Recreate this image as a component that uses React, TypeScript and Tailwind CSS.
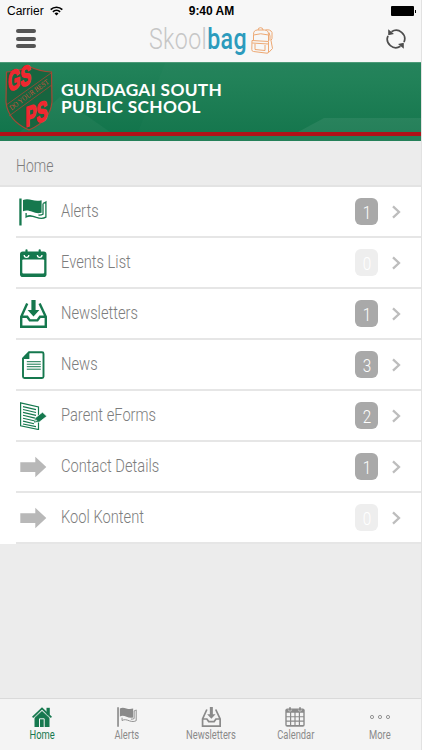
import type { ReactNode } from "react";

type IconProps = { className?: string };

function FlagIcon({ className }: IconProps) {
  return (
    <svg viewBox="0 0 28 28" className={className} fill="currentColor">
      <path d="M.3.5h2.300v27H.3z" />
      <path d="M4 2c3-1.400 6-.9 9 0s6 1.200 9.600.2v12.600c-3.500.8-6.300.4-9.300-1S7 11.800 4 13.200z" />
      <path
        d="M24 5.400c1.200-.2 2-.6 2.900-1.300v15c-2.500 1.600-6 1.500-9.500.3-4-1.500-7-2.600-10.300-.4v-4M24 5.400v10.800q-1.800 1-4.500.8"
        fill="none"
        stroke="currentColor"
        strokeWidth="1.300"
      />
    </svg>
  );
}

function EventsIcon({ className }: IconProps) {
  return (
    <svg viewBox="0 0 28 28" className={className}>
      <rect x="1" y="2.500" width="26.500" height="25.500" rx="2.800" fill="currentColor" />
      <rect x="3.300" y="10.500" width="21.900" height="14" rx="1" fill="#fff" />
      <path d="M5.200 6a2.300 2.300 0 0 0 4.600 0M18.400 6a2.300 2.300 0 0 0 4.600 0" fill="none" stroke="#fff" strokeWidth="1.300" />
      <path d="M7.500 1.300v5M20.700 1.300v5" stroke="currentColor" strokeWidth="2.200" strokeLinecap="round" />
    </svg>
  );
}

function InboxIcon({ className }: IconProps) {
  return (
    <svg viewBox="0 0 28 28" className={className}>
      <path
        d="M8.200 3.500 2.200 16.800v10h24.600v-10L20.600 3.500M2.200 16.800h6l2.600 3.600h7.600l2.600-3.600h5.800"
        fill="none"
        stroke="currentColor"
        strokeWidth="2.400"
      />
      <path d="M12.400 0h4.200v10h3.800l-5.900 6.600L8.600 10h3.800z" fill="currentColor" />
    </svg>
  );
}

function NewsIcon({ className }: IconProps) {
  return (
    <svg viewBox="0 0 28 28" className={className}>
      <path d="M10 1.300h13a1.500 1.500 0 0 1 1.500 1.500v22.700A1.500 1.500 0 0 1 23 27H5.500A1.500 1.500 0 0 1 4 25.500V7.500z" fill="none" stroke="currentColor" strokeWidth="1.900" />
      <path d="M10.400.6v7.300H3.200z" fill="currentColor" />
      <path d="M7.800 10.700h14M7.800 13.200h14M7.800 15.700h14M7.800 18.200h14" stroke="currentColor" strokeWidth="1" />
    </svg>
  );
}

function FormIcon({ className }: IconProps) {
  return (
    <svg viewBox="0 0 28 28" className={className}>
      <path d="M1.600.8 19.500 5v22.500L1.600 23.800z" fill="none" stroke="currentColor" strokeWidth="1.200" />
      <path
        d="m4 4.600 13 3M4 7.500l13 3M4 10.400l13 3M4 13.300l12 2.800M4 16.200l11 2.600M4 19.100l11 2.600M4 22l13 2.600"
        stroke="currentColor"
        strokeWidth="1.100"
      />
      <path d="m15 20.500 1.500-4.800 7-5.500 4.300 4.100-7.500 5.800z" fill="currentColor" stroke="#fff" strokeWidth=".7" />
      <path d="m15.300 20.200 1.300-3.600 2 2.500z" fill="#fff" stroke="currentColor" strokeWidth=".7" />
    </svg>
  );
}

function ArrowIcon({ className }: IconProps) {
  return (
    <svg viewBox="0 0 28 28" className={className} fill="currentColor">
      <path d="M1.300 9.200h15V3.800l11 10.300-11 10.200v-5.400h-15z" />
    </svg>
  );
}

function HomeIcon({ className }: IconProps) {
  return (
    <svg viewBox="0 0 20 20" className={className}>
      <path d="M14.500.8h3.300v7h-3.300z" fill="currentColor" />
      <path d="M2.500 10 10 3.500l7.500 6.500v10h-15z" fill="currentColor" />
      <path d="m.6 10.400 9.400-9 9.400 9" fill="none" stroke="currentColor" strokeWidth="1.700" />
      <path d="m1.800 11.300 8.200-7.700 8.200 7.700" fill="none" stroke="#f4f4f4" strokeWidth=".7" />
      <path d="M7.500 20v-8.200h4.700V20" fill="none" stroke="#f4f4f4" strokeWidth="1" />
    </svg>
  );
}

function CalendarIcon({ className }: IconProps) {
  return (
    <svg viewBox="0 0 20 20" className={className}>
      <rect x=".3" y="1.500" width="19.400" height="18.300" rx="2" fill="currentColor" />
      <path d="M5 .2v3M15 .2v3" stroke="currentColor" strokeWidth="1.800" />
      <path d="M3.300 2.500a1.700 1.700 0 0 0 3.400 0M13.300 2.500a1.700 1.700 0 0 0 3.400 0" fill="none" stroke="#f4f4f4" strokeWidth=".5" />
      <path
        d="M1.700 5.800h3.300v3.400H1.700zm4.500 0h3.200v3.400H6.200zm4.400 0h3.200v3.400h-3.200zm4.400 0h3.300v3.400h-3.300zM1.700 10.300h3.300v3.300H1.700zm4.500 0h3.200v3.300H6.200zm4.400 0h3.200v3.300h-3.200zm4.400 0h3.300v3.300h-3.300zM1.700 14.700h3.300v3.400H1.700zm4.500 0h3.200v3.400H6.200zm4.400 0h3.200v3.400h-3.200zm4.400 0h3.300v3.400h-3.300z"
        fill="#f4f4f4"
      />
    </svg>
  );
}

function MoreIcon({ className }: IconProps) {
  return (
    <svg viewBox="0 0 20 20" className={className} fill="none" stroke="currentColor" strokeWidth=".9">
      <circle cx="2" cy="10" r="1.600" />
      <circle cx="10" cy="10" r="1.600" />
      <circle cx="18" cy="10" r="1.600" />
    </svg>
  );
}

function WifiIcon({ className }: IconProps) {
  return (
    <svg viewBox="0 0 13 10" className={className} fill="none" stroke="#000" strokeWidth="1.700">
      <path d="M.7 3.600a8.300 8.300 0 0 1 11.600 0M2.900 5.900a5.200 5.200 0 0 1 7.200 0" />
      <path d="M4.500 7.500a2.900 2.900 0 0 1 4 0l-2 2z" fill="#000" stroke="none" />
    </svg>
  );
}

function RefreshIcon({ className }: IconProps) {
  return (
    <svg viewBox="0 0 20 20" className={className}>
      <path d="M5.500 2.800A8.500 8.500 0 0 1 18 13.200M14.500 17.200A8.500 8.500 0 0 1 2 6.800" fill="none" stroke="#4d4d4d" strokeWidth="1.700" />
      <path d="M2.200.3v6l5.800-1.300zM17.800 19.700v-6l-5.800 1.300z" fill="#4d4d4d" />
    </svg>
  );
}

function BackpackIcon({ className }: IconProps) {
  return (
    <svg viewBox="0 0 23 27" className={className} fill="none" stroke="#eda873" strokeWidth="1" strokeLinejoin="round">
      <path d="M2.500 13V7.500q0-4.500 4-4.500h7q4 0 4 4.500V14M7 3q0-2.300 2.500-2.300T12 3M2.500 8q7-2.500 15 0" />
      <path d="M1 13.500l16.500 1V25q0 1.200-1.500 1.200L2.500 24.500Q.7 24.300.8 22.500zM1.200 16l16.300 1M4 17v5.500l10 1V18" />
      <path d="M14.500 3q5-1 6.500 2.500v6l-1 2 1.500 8-3.800 4M18 5.500q1.500 3 1 8" />
    </svg>
  );
}

function SchoolCrest({ className }: IconProps) {
  return (
    <svg viewBox="0 0 48 66" className={className}>
      <path
        d="M1.500 7Q13 6.500 24 1.500 35 6.500 46.500 7L47 37Q45 56 24 65 3 56 1 37z"
        fill="#17653f"
        stroke="#a54835"
        strokeWidth="1.200"
      />
      <path d="M1.200 40 46.800 7.500M4 51 46.800 20" stroke="#a54835" strokeWidth=".8" />
      <g fontFamily="Liberation Sans, sans-serif" fontWeight="700" fill="#ef2830" stroke="#ef2830" strokeWidth="1.600">
        <text transform="translate(3 26.500) skewY(-19)" fontSize="28" textLength="23" lengthAdjust="spacingAndGlyphs">
          GS
        </text>
        <text transform="translate(20.500 62) skewY(-19)" fontSize="28" textLength="22" lengthAdjust="spacingAndGlyphs">
          PS
        </text>
      </g>
      <text
        transform="translate(6.500 45.500) rotate(-36)"
        fontFamily="Liberation Serif, serif"
        fontSize="7.500"
        fill="#d0503a"
        textLength="47"
        lengthAdjust="spacingAndGlyphs"
      >
        DO YOUR BEST
      </text>
    </svg>
  );
}

const MENU = [
  { label: "Alerts", count: 1, Icon: FlagIcon, color: "text-[#15784e]" },
  { label: "Events List", count: 0, Icon: EventsIcon, color: "text-[#15784e]" },
  { label: "Newsletters", count: 1, Icon: InboxIcon, color: "text-[#15784e]" },
  { label: "News", count: 3, Icon: NewsIcon, color: "text-[#15784e]" },
  { label: "Parent eForms", count: 2, Icon: FormIcon, color: "text-[#15784e]" },
  { label: "Contact Details", count: 1, Icon: ArrowIcon, color: "text-[#b8b8b8]" },
  { label: "Kool Kontent", count: 0, Icon: ArrowIcon, color: "text-[#b8b8b8]" },
];

const TABS = [
  { label: "Home", Icon: HomeIcon, active: true },
  { label: "Alerts", Icon: FlagIcon, active: false },
  { label: "Newsletters", Icon: InboxIcon, active: false },
  { label: "Calendar", Icon: CalendarIcon, active: false },
  { label: "More", Icon: MoreIcon, active: false },
];

function Label({ children }: { children: ReactNode }) {
  return (
    <span className="inline-block origin-left scale-x-[0.84] whitespace-nowrap text-[17.500px] leading-6 font-light text-[#7d7d7d]">
      {children}
    </span>
  );
}

function MenuRow({ label, count, Icon, color }: (typeof MENU)[number]) {
  return (
    <li className="ml-4 flex h-[51px] items-center border-b-2 border-[#e6e6e6] pr-5 pl-[3px]">
      <Icon className={`size-7 shrink-0 ${color}`} />
      <div className="ml-[14px] flex-1">
        <Label>{label}</Label>
      </div>
      <span
        className={`flex h-[27px] w-[23px] items-center justify-center rounded-md pt-px text-[18px] font-light text-white ${
          count > 0 ? "bg-[#a9a9a9]" : "bg-[#eeeeee]"
        }`}
      >
        <span className="scale-x-[0.85]">{count}</span>
      </span>
      <svg viewBox="0 0 9 14" className="ml-[14px] h-[14px] w-[9px]" fill="none" stroke="#bdbdbd" strokeWidth="2.300">
        <path d="m1 1.300 6 5.700-6 5.700" />
      </svg>
    </li>
  );
}

export default function App() {
  return (
    <div className="h-[750px] w-[422px] overflow-hidden border-r border-[#e2e2e2] bg-[#ececec] font-['Roboto',sans-serif]">
      <div className="flex h-full flex-col">
        <header className="h-[62px] bg-[#f7f7f7]">
          <div className="grid h-[22px] grid-cols-3 items-center pr-[5px] pl-[7px] font-['Liberation_Sans',sans-serif] text-[12px] text-black">
            <div className="flex items-center gap-[6px]">
              <span>Carrier</span>
              <WifiIcon className="h-[10px] w-[13px]" />
            </div>
            <span className="text-center font-bold">9:40 AM</span>
            <div className="flex items-center justify-end">
              <span className="h-[10px] w-[23px] rounded-[1px] bg-black" />
              <span className="ml-px h-[3px] w-px bg-black" />
            </div>
          </div>
          <div className="flex h-[33px] items-center justify-between pr-[15px] pl-4">
            <div className="flex flex-col gap-[3.500px]">
              <span className="h-1 w-5 rounded-sm bg-[#555]" />
              <span className="h-1 w-5 rounded-sm bg-[#555]" />
              <span className="h-1 w-5 rounded-sm bg-[#555]" />
            </div>
            <div className="flex items-center">
              <h1 className="w-[102px] origin-left scale-x-[0.785] text-[29.500px] leading-8 tracking-[0.500px] whitespace-nowrap text-[#c6c6c6]">
                <span className="font-light">Skool</span>
                <span className="font-medium text-[#2c9bbd]">bag</span>
              </h1>
              <BackpackIcon className="mt-[3px] h-[27px] w-[23px]" />
            </div>
            <RefreshIcon className="size-5" />
          </div>
        </header>

        <section className="flex h-[79px] flex-col border-t border-[#4c9a78] bg-linear-to-b from-[#22835a] to-[#10734a]">
          <div className="relative h-[69px]">
            <svg viewBox="0 0 421 69" className="absolute inset-0 h-[69px] w-[421px]" fill="#fff">
              <path d="M165 0h256v69H138z" opacity=".015" />
              <path d="M60 34 110 69H20z" opacity=".04" />
              <path d="M298 69l26-14h97v14z" opacity=".07" />
            </svg>
            <div className="relative flex pt-[2px] pl-[5px]">
              <SchoolCrest className="h-[66px] w-12 overflow-visible" />
              <h2 className="mt-[16px] ml-2 w-40 origin-left scale-x-[1.017] font-['Lato',sans-serif] text-[17px] leading-[17px] font-bold tracking-[0.300px] whitespace-nowrap text-white">
                GUNDAGAI SOUTH
                <br />
                PUBLIC SCHOOL
              </h2>
            </div>
          </div>
          <div className="h-1 bg-[#b11218]" />
          <div className="flex-1 bg-[#248059]" />
        </section>

        <div className="flex h-[46px] items-center border-b-2 border-[#e3e3e3] pt-[6px] pl-4">
          <span className="origin-left scale-x-[0.8] text-[17.500px] leading-6 font-light text-[#7d7d7d]">Home</span>
        </div>

        <ul className="bg-white">
          {MENU.map((item) => (
            <MenuRow key={item.label} {...item} />
          ))}
        </ul>

        <nav className="mt-auto -mr-px grid h-[52px] grid-cols-5 border-t border-[#dadada] bg-[#f4f4f4]">
          {TABS.map(({ label, Icon, active }) => (
            <div
              key={label}
              className={`flex flex-col items-center pt-2 ${active ? "text-[#15784e]" : "text-[#8a8a8a]"}`}
            >
              <Icon className="size-5" />
              <span className="scale-x-[0.78] text-[12px] leading-4">{label}</span>
            </div>
          ))}
        </nav>
      </div>
    </div>
  );
}
